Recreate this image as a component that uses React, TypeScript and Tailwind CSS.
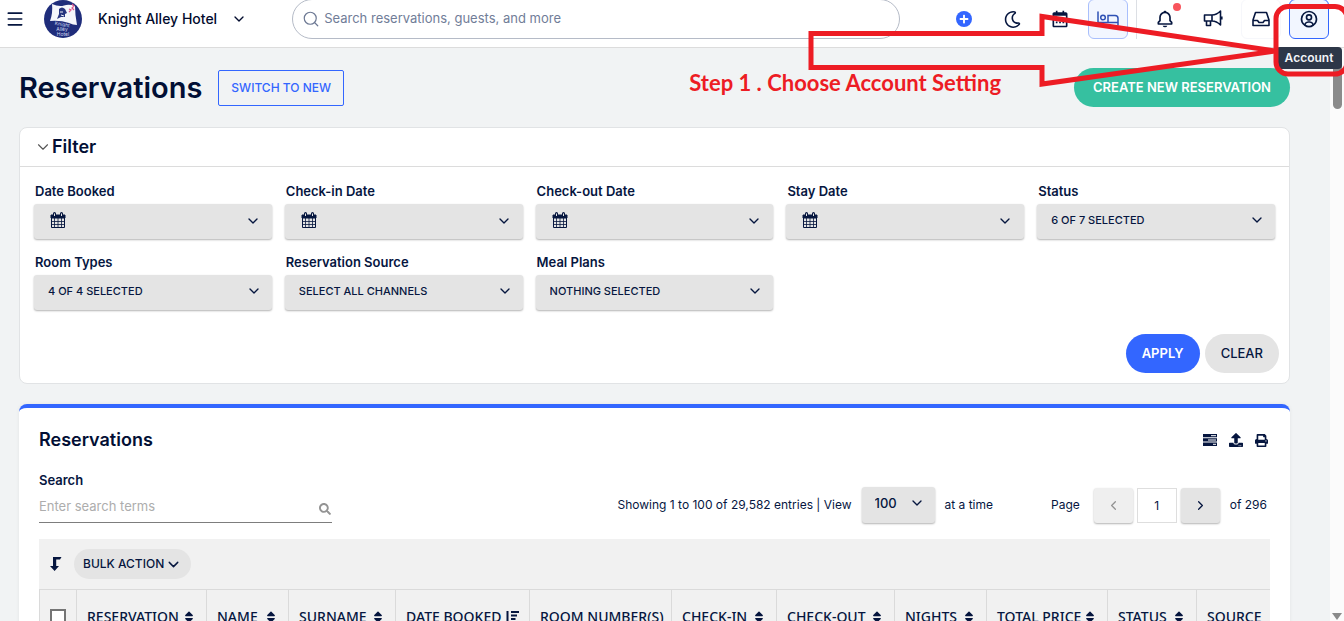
import type { ReactNode } from "react";
import { BiBell, BiCalendar, BiUserCircle } from "react-icons/bi";
import { FaPlus, FaPrint, FaRegMoon, FaSearch, FaSort, FaUpload } from "react-icons/fa";
import { ChevronDown, ChevronLeft, ChevronRight, Menu, Search } from "lucide-react";

function CalendarGridIcon() {
  return (
    <svg width="16" height="17" viewBox="0 0 16 17" fill="none" stroke="currentColor" aria-hidden="true">
      <path d="M1 3h14v3H1z" fill="currentColor" />
      <path d="M1.500 3.500h13v12h-13z" />
      <path d="M1 9.500h14M1 12.500h14M4.500 6v9M8 6v9M11.500 6v9" strokeWidth="0.800" />
      <path d="M4.500 1.500v2M11.500 1.500v2" strokeWidth="3" strokeLinecap="round" />
      <path d="M4.500 1.500v2.500M11.500 1.500v2.500" stroke="#e4e4e4" />
    </svg>
  );
}

function BedIcon() {
  return (
    <svg width="22" height="20" viewBox="0 0 22 20" fill="none" stroke="currentColor" strokeWidth="1.500" strokeLinecap="round" aria-hidden="true">
      <path d="M1 3v13M1 13.500h20M21 16v-6.500a3 3 0 0 0-3-3h-7v7" />
      <circle cx="6" cy="8.500" r="2.300" />
    </svg>
  );
}

function MegaphoneIcon() {
  return (
    <svg width="20" height="20" viewBox="0 0 20 20" fill="none" stroke="currentColor" strokeWidth="1.600" strokeLinejoin="round" aria-hidden="true">
      <path d="M1.500 6h7.500v6H1.500zM9 6c3.500 0 6-1.500 8.500-4v14c-2.500-2.500-5-4-8.500-4zM3.500 12v4.500h4V12M18.800 7.500v3" />
    </svg>
  );
}

function TrayIcon() {
  return (
    <svg width="20" height="20" viewBox="0 0 20 20" fill="none" stroke="currentColor" strokeWidth="1.600" strokeLinejoin="round" aria-hidden="true">
      <path d="M4.500 3.500h11l2.500 7.500v5.500H2V11zM2 11.500h4.500l1.500 2h4l1.500-2H18" />
    </svg>
  );
}

function TasksIcon() {
  return (
    <svg width="14" height="12" viewBox="0 0 14 12" aria-hidden="true">
      <path d="M0 0h14v3.300H0zM0 4.300h14v3.300H0zM0 8.600h14V12H0z" fill="currentColor" />
      <path d="M8 1.700h5M5 6h8M10 10.300h3" stroke="#fff" />
    </svg>
  );
}

function TurnDownIcon() {
  return (
    <svg width="12" height="16" viewBox="0 0 12 16" fill="currentColor" aria-hidden="true">
      <path d="M3 1h8.500L10 3.500H6.200V10H9L4.600 15 0 10h3z" />
    </svg>
  );
}

function SortedDownIcon() {
  return (
    <svg width="13" height="12" viewBox="0 0 13 12" stroke="currentColor" strokeWidth="2" aria-hidden="true">
      <path d="M1.500 0v12M5 1h8M5 4.500h6M5 8h4.500M5 11h3" />
    </svg>
  );
}

function HotelLogo() {
  return (
    <svg width="38" height="38" viewBox="0 0 38 38" role="img" aria-label="Knight Alley Hotel">
      <circle cx="19" cy="19" r="19" fill="#1f2d7b" />
      <path d="M8 4q7 3 12 1.500T31 6q0 9 2 19-4 0-8-2-9-3-19-2 3-8 2-17z" fill="#f5f6fb" />
      <path d="M15 9q3-3 6 0l2 4-2 1v3h-4l-4 2 2-5z" fill="#27357f" />
      <path d="M16 12h3M17 15l3 1" stroke="#f5f6fb" />
      <path d="M28 4l2 2-2 2 2 2M25 9l2 1-2 2" fill="none" stroke="#e0568c" strokeWidth="1.200" />
      <g fill="#cfd4ee" fontSize="5" textAnchor="middle" className="font-[Inter]">
        <text x="18" y="26" transform="rotate(10 18 26)">Knight</text>
        <text x="18" y="31">Alley</text>
        <text x="19" y="36">Hotel</text>
      </g>
    </svg>
  );
}

function NavButton({ label, look = "border-transparent", children }: { label: string; look?: string; children: ReactNode }) {
  return (
    <button type="button" aria-label={label} className={`relative flex size-10 shrink-0 items-center justify-center rounded-md border ${look}`}>
      {children}
    </button>
  );
}

const fieldBox = "h-[35px] w-full rounded-[3px] bg-[#e4e4e4] shadow-[0_1px_2px_rgba(0,0,0,0.3)]";
const fieldLabel = "block h-[21px] pl-px text-[13px] leading-4 font-semibold";

function DateFilter({ id, label }: { id: string; label: string }) {
  return (
    <div>
      <label htmlFor={id} className={fieldLabel}>{label}</label>
      <button id={id} type="button" aria-haspopup="dialog" className={`${fieldBox} flex items-center justify-between pr-[11px] pb-[2px] pl-4`}>
        <CalendarGridIcon />
        <ChevronDown size={16} />
      </button>
    </div>
  );
}

function SelectFilter({ id, label, value }: { id: string; label: string; value: string }) {
  return (
    <div>
      <label htmlFor={id} className={fieldLabel}>{label}</label>
      <div className="relative">
        <select id={id} className={`${fieldBox} appearance-none pr-8 pb-[2px] pl-[14px] text-[11px] font-medium`}>
          <option>{value}</option>
        </select>
        <ChevronDown size={16} className="pointer-events-none absolute top-2 right-[10px]" />
      </div>
    </div>
  );
}

const columns = [
  { name: "RESERVATION", width: "w-[130px]", sort: "both" },
  { name: "NAME", width: "w-[82px]", sort: "both" },
  { name: "SURNAME", width: "w-[107px]", sort: "both" },
  { name: "DATE BOOKED", width: "w-[134px]", sort: "down" },
  { name: "ROOM NUMBER(S)", width: "w-[142px]", sort: "none" },
  { name: "CHECK-IN", width: "w-[105px]", sort: "both" },
  { name: "CHECK-OUT", width: "w-[118px]", sort: "both" },
  { name: "NIGHTS", width: "w-[92px]", sort: "both" },
  { name: "TOTAL PRICE", width: "w-[121px]", sort: "both" },
  { name: "STATUS", width: "w-[89px]", sort: "both" },
  { name: "SOURCE", width: "w-[110px]", sort: "none" },
];

export default function App() {
  return (
    <div className="relative flex h-screen flex-col overflow-hidden bg-[#f1f3f4] font-[Inter,sans-serif] text-[#06163f]">
      <header className="flex h-12 shrink-0 items-center border-b border-[#dcdcdc] bg-white pr-[15px] pb-[9px] pl-[5px]">
        <button type="button" aria-label="Menu" className="flex size-5 items-center justify-center"><Menu size={20} /></button>
        <div className="ml-[19px]"><HotelLogo /></div>
        <button type="button" className="ml-4 flex items-center gap-[14px] text-sm font-medium whitespace-nowrap text-[#020b2d]">
          Knight Alley Hotel <ChevronDown size={16} />
        </button>
        <label className="ml-[45px] flex h-10 w-[608px] items-center gap-1 rounded-full border border-[#b5bbc7] pl-[9px] text-[#6c7893]">
          <Search size={18} strokeWidth={1.6} />
          <input aria-label="Search reservations, guests, and more" placeholder="Search reservations, guests, and more" className="min-w-0 flex-1 text-[13px] outline-none placeholder:text-[#717d98]" />
        </label>
        <nav className="ml-auto flex items-center gap-2">
          <NavButton label="Add">
            <span className="flex size-4 items-center justify-center rounded-full bg-[#3366ff] text-white"><FaPlus size={10} /></span>
          </NavButton>
          <NavButton label="Dark mode"><FaRegMoon size={17} /></NavButton>
          <NavButton label="Calendar"><BiCalendar size={20} /></NavButton>
          <NavButton label="Reservations" look="border-[#a9bffc] bg-[#f2f6ff] text-[#2f51b5]"><BedIcon /></NavButton>
          <span className="h-10 w-px bg-[#dcdfe4]" />
          <NavButton label="Notifications">
            <BiBell size={20} />
            <span className="absolute top-[3px] right-[3px] size-2 rounded-full bg-[#f8545c]" />
          </NavButton>
          <NavButton label="Announcements"><MegaphoneIcon /></NavButton>
          <NavButton label="Inbox" look="border-[#f6f7fb]"><TrayIcon /></NavButton>
          <NavButton label="Account" look="border-[#3366ff] bg-[#f2f6ff]"><BiUserCircle size={20} /></NavButton>
        </nav>
      </header>

      <div className="flex min-h-0 flex-1">
        <main className="min-w-0 flex-1 pt-5 pr-10 pl-[19px]">
          <div className="flex h-[39px] items-center">
            <h1 className="text-[29px] leading-9 font-semibold text-[#020f35]">Reservations</h1>
            <button type="button" className="ml-4 h-9 rounded-xs border border-[#3366ff] px-3 text-xs font-medium whitespace-nowrap text-[#3366ff]">SWITCH TO NEW</button>
            <button type="button" className="ml-auto h-[39px] rounded-full bg-[#36c0a0] px-[19px] text-[13px] font-semibold whitespace-nowrap text-white">CREATE NEW RESERVATION</button>
          </div>

          <section className="mt-5 rounded-lg border border-[#e1e3e5] bg-white">
            <h2 className="border-b border-[#dcdcdc]">
              <button type="button" aria-expanded="true" className="flex h-[38px] w-full items-center pl-[14px] text-lg font-semibold text-[#020f35]">
                <ChevronDown size={18} strokeWidth={1.5} className="text-[#555]" /> Filter
              </button>
            </h2>
            <div className="grid grid-cols-5 gap-x-[13px] gap-y-[15px] px-[14px] pt-4">
              <DateFilter id="booked" label="Date Booked" />
              <DateFilter id="checkin" label="Check-in Date" />
              <DateFilter id="checkout" label="Check-out Date" />
              <DateFilter id="stay" label="Stay Date" />
              <SelectFilter id="status" label="Status" value="6 OF 7 SELECTED" />
              <SelectFilter id="rooms" label="Room Types" value="4 OF 4 SELECTED" />
              <SelectFilter id="source" label="Reservation Source" value="SELECT ALL CHANNELS" />
              <SelectFilter id="meals" label="Meal Plans" value="NOTHING SELECTED" />
            </div>
            <div className="flex justify-end gap-[5px] px-[10px] pt-6 pb-[10px] text-[13px]">
              <button type="button" className="h-[39px] rounded-full bg-[#3366ff] px-4 font-semibold text-white">APPLY</button>
              <button type="button" className="h-[39px] rounded-full bg-[#e4e4e4] px-4 font-medium">CLEAR</button>
            </div>
          </section>

          <section className="mt-5 rounded-lg border-t-4 border-[#3366ff] bg-white px-5 pt-[18px] shadow-[0_0_4px_rgba(0,0,0,0.06)]">
            <div className="flex items-center justify-between pr-[2px]">
              <h2 className="text-lg leading-7 font-semibold text-[#020f35]">Reservations</h2>
              <div className="flex items-center gap-3">
                <button type="button" aria-label="Columns"><TasksIcon /></button>
                <button type="button" aria-label="Export"><FaUpload size={14} /></button>
                <button type="button" aria-label="Print"><FaPrint size={13} /></button>
              </div>
            </div>

            <div className="mt-[18px] flex items-end justify-between">
              <div className="w-[293px]">
                <label htmlFor="terms" className="block text-[13px] leading-4 font-semibold">Search</label>
                <div className="mt-[3px] flex h-8 items-center border-b border-[#7d7d7d]">
                  <input id="terms" placeholder="Enter search terms" className="min-w-0 flex-1 text-[13px] outline-none placeholder:text-[#adadad]" />
                  <FaSearch size={12} className="mt-[5px] mr-px text-[#949494]" />
                </div>
              </div>
              <div className="flex items-center pr-[3px] text-xs whitespace-nowrap">
                <label htmlFor="size">Showing 1 to 100 of 29,582 entries | View</label>
                <div className="relative mx-[10px]">
                  <select id="size" className="h-9 w-[73px] appearance-none rounded-[3px] bg-[#e4e4e4] pb-[2px] pl-[13px] text-[13px] font-medium shadow-[0_1px_2px_rgba(0,0,0,0.3)]">
                    <option>100</option>
                  </select>
                  <ChevronDown size={16} className="pointer-events-none absolute top-2 right-[10px]" />
                </div>
                <span>at a time</span>
                <label htmlFor="page" className="ml-[58px]">Page</label>
                <button type="button" disabled aria-label="Previous page" className="ml-[14px] flex h-[35px] w-[39px] items-center justify-center rounded-[3px] bg-[#efefef] text-[#929292] shadow-[0_1px_2px_rgba(0,0,0,0.3)]"><ChevronLeft size={15} /></button>
                <input id="page" defaultValue="1" className="mx-1 h-[35px] w-10 border border-[#dedede] text-center text-xs" />
                <button type="button" aria-label="Next page" className="mr-[10px] flex h-[35px] w-[39px] items-center justify-center rounded-[3px] bg-[#e4e4e4] shadow-[0_1px_2px_rgba(0,0,0,0.3)]"><ChevronRight size={15} /></button>
                <span>of 296</span>
              </div>
            </div>

            <div className="mt-4 overflow-hidden bg-[#f1f1f1]">
              <div className="flex h-[50px] items-center gap-3 pl-[11px]">
                <TurnDownIcon />
                <button type="button" className="flex h-[30px] items-center gap-px rounded-full bg-[#e4e4e4] px-[9px] text-xs font-medium">
                  BULK ACTION <ChevronDown size={17} />
                </button>
              </div>
              <table className="w-[1267px] table-fixed border-collapse font-['Noto_Sans',sans-serif] text-[14px] leading-4">
                <thead>
                  <tr className="h-[54px]">
                    <th className="w-[37px] border border-[#dadada] px-[10px] text-left align-middle">
                      <input type="checkbox" aria-label="Select all" className="block size-4 appearance-none border-2 border-[#757575] bg-white" />
                    </th>
                    {columns.map((c) => (
                      <th key={c.name} className={`${c.width} border border-[#dadada] pr-[10px] pl-[10px] font-medium`}>
                        <span className="flex items-center justify-between whitespace-nowrap">
                          {c.name}
                          {c.sort === "both" && <FaSort size={14} />}
                          {c.sort === "down" && <SortedDownIcon />}
                        </span>
                      </th>
                    ))}
                  </tr>
                </thead>
              </table>
            </div>
          </section>
        </main>

        <div aria-hidden="true" className="flex w-[14px] shrink-0 flex-col items-center justify-between bg-[#fbfbfb] pt-3 pb-px">
          <span className="h-[49px] w-[9px] rounded-full bg-[#8b8b8b]" />
          <svg width="10" height="8" viewBox="0 0 10 8"><path d="M0 1h10L5 8z" fill="#8b8b8b" /></svg>
        </div>
      </div>

      <div role="tooltip" className="absolute top-[47px] right-[2px] flex h-[22px] w-[66px] items-center justify-center rounded-sm bg-[#2d3748] text-xs font-semibold text-[#f2f4f8]">Account</div>
      <p className="absolute top-[71px] right-[343px] font-[Lato,sans-serif] text-[22px] leading-6 font-bold whitespace-nowrap text-[#ed1c24]">Step 1 . Choose Account Setting</p>
      <svg width="544" height="100" viewBox="0 0 544 100" fill="none" stroke="#ed1c24" strokeWidth="5" className="pointer-events-none absolute top-0 right-0" aria-hidden="true">
        <path d="M11 33.500H242V16.500L475 51 242 84V67.500H11z" />
        <rect x="476" y="6.500" width="71" height="67.500" rx="12" />
      </svg>
    </div>
  );
}
